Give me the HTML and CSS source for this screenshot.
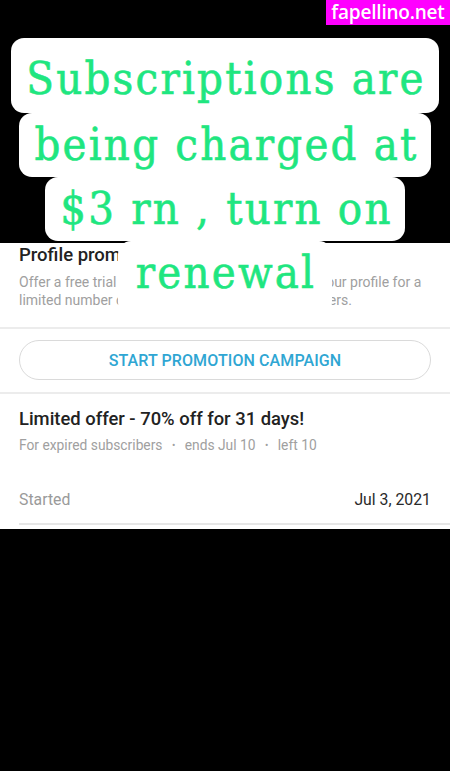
FILE: index.html
```html
<!DOCTYPE html>
<html>
<head>
    <title>Profile promotion</title>
    <link rel="stylesheet" href="styles.css">
</head>
<body>
    <div class="watermark">fapellino.net</div>

    <div class="caption">
        <span class="caption-line first">Subscriptions are</span>
        <span class="caption-line">being charged at</span>
        <span class="caption-line">$3 rn , turn on</span>
        <span class="caption-line last">renewal</span>
    </div>

    <div class="screen">
        <div class="section intro">
            <h2 class="title">Profile promotion campaign</h2>
            <p class="desc">Offer a free trial or a discounted subscription on your profile for a limited number of new or already expired subscribers.</p>
        </div>

        <div class="section actions">
            <button class="pill-btn">START PROMOTION CAMPAIGN</button>
        </div>

        <div class="section offer">
            <div class="offer-title">Limited offer - 70% off for 31 days!</div>
            <div class="offer-meta">
                <span>For expired subscribers</span>
                <span class="dot">•</span>
                <span>ends Jul 10</span>
                <span class="dot">•</span>
                <span>left 10</span>
            </div>
            <div class="offer-row">
                <span class="row-label">Started</span>
                <span class="row-value">Jul 3, 2021</span>
            </div>
        </div>
    </div>
</body>
</html>
```

FILE: styles.css
```css
body { margin: 0; background: #000; font-family: Roboto, "Noto Sans", sans-serif; min-height: 771px; }

.watermark { position: absolute; top: 0; right: 0; width: 124px; height: 25px; background: #ff00ff; color: #fff; font-family: "Open Sans", sans-serif; font-weight: 600; font-size: 19px; line-height: 25px; text-align: center; letter-spacing: -0.2px; }

.caption { position: absolute; top: 38px; left: 0; right: 0; display: flex; flex-direction: column; align-items: center; z-index: 2; }
.caption-line { display: block; background: #fff; color: #1fe680; font-family: "DejaVu Serif Condensed", "DejaVu Serif", serif; font-stretch: condensed; font-size: 45px; line-height: 64px; letter-spacing: 2.2px; padding: 0 12px 0 15px; border-radius: 13px; white-space: nowrap; -webkit-text-stroke: 0.6px #1fe680; }
.caption-line.first { padding: 9px 13px 2px 15px; }
.caption-line.last { padding: 0 16px 10px 18px; }

.screen { margin-top: 243px; background: #fff; border-bottom: 4px solid #fff; }
.section { border-bottom: 2px solid #ececec; }

.intro { padding: 0 19px 18px; }
.title { margin: 0; font-size: 18.5px; font-weight: 500; line-height: 24px; color: #222; }
.desc { margin: 6px 0 0; font-size: 14px; line-height: 18px; color: #a0a0a0; }

.actions { padding: 11px 19px 12px; }
.pill-btn { display: block; width: 100%; height: 40px; border: 1px solid #dadada; border-radius: 20px; background: #fff; color: #2fa6d3; font-family: Roboto, sans-serif; font-size: 16px; font-weight: 500; letter-spacing: 0.1px; cursor: pointer; }

.offer { margin-left: 19px; padding: 13px 19px 13px 0; border-bottom-color: #e6e6e6; }
.offer-title { font-size: 18.4px; font-weight: 500; line-height: 24px; color: #222; }
.offer-meta { margin-top: 5px; font-size: 13.8px; line-height: 18px; color: #a0a0a0; }
.offer-meta .dot { margin: 0 6px; font-size: 10px; vertical-align: 1px; }
.offer-row { display: flex; justify-content: space-between; margin-top: 35px; font-size: 15.8px; line-height: 20px; }
.row-label { color: #9a9a9a; }
.row-value { color: #2a2a2a; }
```
